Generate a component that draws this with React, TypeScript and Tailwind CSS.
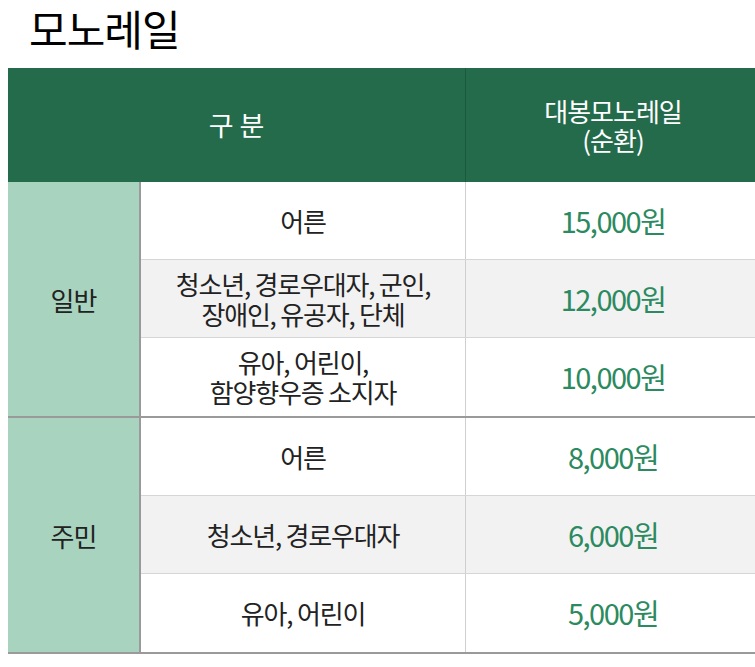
import React from 'react';

// Tabela de tarifas do monorail
interface FareRow {
    label: string[];
    price: string;
}

interface FareGroup {
    name: string;
    rows: FareRow[];
}

const groups: FareGroup[] = [
    {
        name: '일반',
        rows: [
            { label: ['어른'], price: '15,000원' },
            { label: ['청소년, 경로우대자, 군인,', '장애인, 유공자, 단체'], price: '12,000원' },
            { label: ['유아, 어린이,', '함양향우증 소지자'], price: '10,000원' },
        ],
    },
    {
        name: '주민',
        rows: [
            { label: ['어른'], price: '8,000원' },
            { label: ['청소년, 경로우대자'], price: '6,000원' },
            { label: ['유아, 어린이'], price: '5,000원' },
        ],
    },
];

const font = { fontFamily: '"Noto Sans CJK KR", "Noto Sans", sans-serif' };

export default function App() {
    return (
        <div className="w-[755px] h-[667px] overflow-hidden bg-white text-[#222]" style={font}>
            <div className="h-[68px] pl-[29px]">
                <h1 className="text-[42px] leading-[56px] font-normal tracking-[-1px] text-black">모노레일</h1>
            </div>
            <div className="ml-[8px] w-[752px]">
                {/* cabeçalho */}
                <div className="flex h-[114px] bg-[#246b4c] text-white text-[26px] tracking-[-1px]">
                    <div className="w-[458px] flex items-center justify-center border-r border-[#1c5a3f] text-[27px] tracking-[0px]">구&nbsp;분</div>
                    <div className="flex-1 flex flex-col items-center justify-center leading-[29px]">
                        <span>대봉모노레일</span>
                        <span>(순환)</span>
                    </div>
                </div>
                {groups.map((g) => (
                    <div key={g.name} className="flex border-b-2 border-[#9a9a9a]">
                        <div className="w-[133px] flex-shrink-0 bg-[#a8d4bf] border-r-2 border-[#9a9a9a] flex items-center justify-center text-[26px] tracking-[-1px]">
                            {g.name}
                        </div>
                        <div className="flex-1 flex flex-col">
                            {g.rows.map((r, i) => (
                                <div
                                    key={i}
                                    className={`flex h-[78px] ${i < g.rows.length - 1 ? 'border-b border-[#d6d6d6]' : ''} ${i === 1 ? 'bg-[#f2f2f2]' : 'bg-white'}`}
                                >
                                    <div className="w-[325px] flex flex-col items-center justify-center border-r border-[#cfcfcf] text-[26px] leading-[30px] tracking-[-1.2px]">
                                        {r.label.map((l) => (
                                            <span key={l}>{l}</span>
                                        ))}
                                    </div>
                                    <div className="flex-1 flex items-center justify-center text-[29px] tracking-[-1.5px] text-[#2b8a60]">
                                        {r.price}
                                    </div>
                                </div>
                            ))}
                        </div>
                    </div>
                ))}
            </div>
        </div>
    );
}
